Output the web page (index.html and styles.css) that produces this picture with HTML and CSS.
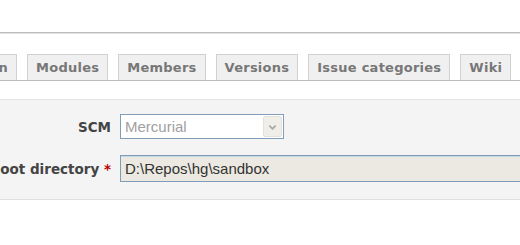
FILE: index.html
```html
<!DOCTYPE HTML>
<html>
	<head>
		<meta charset="utf-8">
		<title>Settings - Repository</title>
		<link rel="stylesheet" href="styles.css">
	</head>
	<body>
		<div class="header"></div>
		<div class="content">
			<ul class="tabs">
				<li><a href="#">Information</a></li>
				<li><a href="#">Modules</a></li>
				<li><a href="#">Members</a></li>
				<li><a href="#">Versions</a></li>
				<li><a href="#">Issue categories</a></li>
				<li><a href="#">Wiki</a></li>
			</ul>
			<div class="box">
				<div class="row">
					<label>SCM</label>
					<div class="select">
						<span>Mercurial</span>
						<span class="arrow">
							<svg width="19" height="20" viewBox="0 0 19 20">
								<path d="M6 8.5 L9.5 12 L13 8.5" fill="none" stroke="#a8a8a8" stroke-width="2"/>
							</svg>
						</span>
					</div>
				</div>
				<div class="row">
					<label>Root directory <span class="required">*</span></label>
					<input type="text" class="text" value="D:\Repos\hg\sandbox" disabled>
				</div>
			</div>
		</div>
	</body>
</html>
```

FILE: styles.css
```css
* {
	box-sizing: border-box;
}
body {
	margin: 0;
	background: #fff;
	font-family: "DejaVu Sans", Verdana, sans-serif;
	font-size: 13px;
	color: #444;
	overflow: hidden;
}
.header {
	height: 33px;
	border-bottom: 1px solid #bcbcbc;
	box-shadow: 0 1px 0 #e2e2e2;
}
.content {
	margin-left: -88px;
	width: 760px;
	padding-top: 21px;
}

/* tabs */
.tabs {
	list-style-type: none;
	margin: 0;
	padding: 0 0 0 0;
	display: flex;
	gap: 10px;
	border-bottom: 1px solid #bbb;
}
.tabs li {
	margin-bottom: -1px;
}
.tabs li:first-child {
	margin-left: -2px;
}
.tabs a {
	display: block;
	padding: 5px 8px 4px 8px;
	line-height: 16px;
	background-color: #f0f0f0;
	border: 1px solid #d0d0d0;
	border-bottom: 1px solid #bbb;
	color: #777;
	font-weight: bold;
	letter-spacing: 0.25px;
	text-decoration: none;
}

/* form box */
.box {
	margin-top: 18px;
	background-color: #f4f4f4;
	border-top: 1px solid #e4e4e4;
	border-bottom: 1px solid #e0e0e0;
	padding: 14px 0 17px 0;
	display: flex;
	flex-direction: column;
	gap: 16px;
}
.row {
	display: grid;
	grid-template-columns: 199px 1fr;
	gap: 9px;
	align-items: center;
}
.row label {
	text-align: right;
	font-weight: bold;
	font-size: 13.5px;
	color: #444;
}
.required {
	color: #bb0000;
}
.select {
	width: 164px;
	height: 25px;
	border: 1px solid #7f9db9;
	background: #fff;
	display: flex;
	align-items: center;
	justify-content: space-between;
	padding: 0 1px 0 4px;
	font-family: "Liberation Sans", Arial, sans-serif;
	font-size: 15px;
	color: #a0a0a0;
}
.arrow {
	width: 19px;
	height: 21px;
	background: #efeee8;
	border: 1px solid #e2e1da;
	border-radius: 2px;
	display: flex;
}
.text {
	height: 27px;
	width: 100%;
	border: 1px solid #7f9db9;
	box-shadow: inset 0 1px 0 #c9d6e3;
	background: #ebe9e1;
	padding: 0 4px;
	font-family: "Liberation Sans", Arial, sans-serif;
	font-size: 15px;
	color: #333;
}
```
